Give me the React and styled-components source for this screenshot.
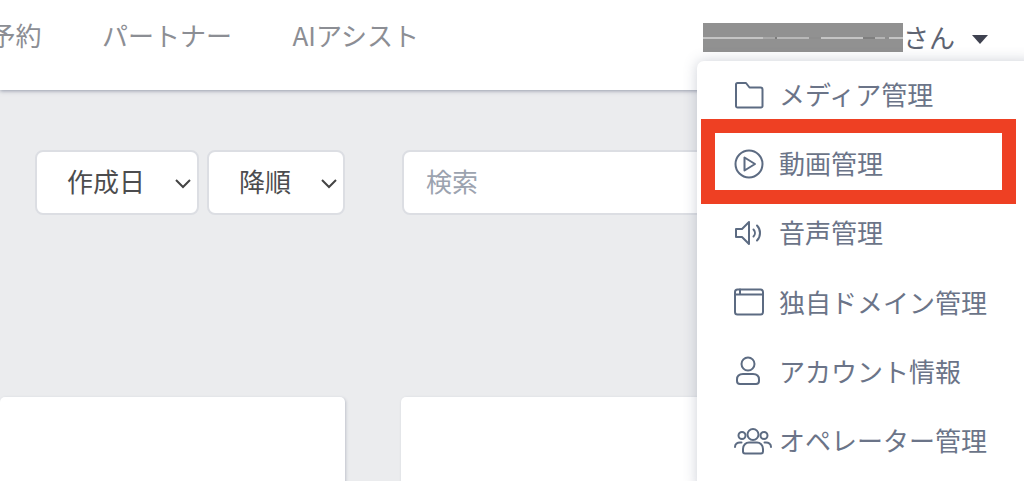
import React from 'react'
import styled, { createGlobalStyle } from 'styled-components'

const GlobalStyle = createGlobalStyle`
  html, body {
    margin: 0;
    padding: 0;
    height: 100%;
    overflow: hidden;
    background: #ebecee;
    font-family: "Noto Sans CJK JP", "Noto Sans", sans-serif;
  }
`

const navItems = ['予約', 'パートナー', 'AIアシスト']

const FolderIcon = () => (
  <Icon width="30" height="28" viewBox="0 0 30 28">
    <path d="M2 3.500a1.500 1.500 0 0 1 1.500-1.500h8.500l3.500 4.500h11a2 2 0 0 1 2 2V25a1.500 1.500 0 0 1-1.500 1.500H3.500A1.500 1.500 0 0 1 2 25z" />
  </Icon>
)

const PlayIcon = () => (
  <Icon width="30" height="30" viewBox="0 0 30 30">
    <circle cx="15" cy="15" r="13.500" />
    <path d="M10.500 8.500v13L21 15z" />
  </Icon>
)

const SpeakerIcon = () => (
  <Icon width="30" height="28" viewBox="0 0 30 28">
    <path d="M2 10h6l7-7v22l-7-7H2z" />
    <path d="M19.500 10.500a5 5 0 0 1 0 7" />
    <path d="M23 6.500a10.500 10.500 0 0 1 3 7.500 10.500 10.500 0 0 1-3 7.500" />
  </Icon>
)

const WindowIcon = () => (
  <Icon width="30" height="28" viewBox="0 0 30 28">
    <rect x="1" y="1.500" width="28" height="25" rx="2.500" />
    <path d="M1 6.500h28M6 1.500v5" />
  </Icon>
)

const UserIcon = () => (
  <Icon width="28" height="30" viewBox="0 0 28 30">
    <circle cx="14" cy="8" r="6.500" />
    <path d="M3 23.500c0-4 3-5.500 6-5.500h10c3 0 6 1.500 6 5.500v1.500a3 3 0 0 1-3 3H6a3 3 0 0 1-3-3z" />
  </Icon>
)

const UsersIcon = () => (
  <Icon width="38" height="28" viewBox="0 0 38 28">
    <circle cx="19" cy="7.500" r="5.500" />
    <circle cx="8" cy="8.500" r="3.500" />
    <circle cx="30" cy="8.500" r="3.500" />
    <path d="M9 22c0-4 3-6.500 6-6.500h8c3 0 6 2.500 6 6.500v2.500a2 2 0 0 1-2 2H11a2 2 0 0 1-2-2z" />
    <path d="M1 20c0-3 2.500-4.500 5-4.500h1.500M37 20c0-3-2.500-4.500-5-4.500h-1.500" />
  </Icon>
)

const menuItems = [
  { label: 'メディア管理', icon: <FolderIcon /> },
  { label: '動画管理', icon: <PlayIcon /> },
  { label: '音声管理', icon: <SpeakerIcon /> },
  { label: '独自ドメイン管理', icon: <WindowIcon /> },
  { label: 'アカウント情報', icon: <UserIcon /> },
  { label: 'オペレーター管理', icon: <UsersIcon /> },
]

const App = () => {
  return (
    <Page>
      <GlobalStyle />
      <Header>
        <Nav>
          {navItems.map((item) => (
            <NavItem key={item}>{item}</NavItem>
          ))}
        </Nav>
        <UserBox>
          <Redacted />
          <UserSuffix>さん</UserSuffix>
          <Caret />
        </UserBox>
      </Header>

      <Main>
        <Toolbar>
          <SelectBox $width={164}>
            作成日
            <Chevron />
          </SelectBox>
          <SelectBox $width={138}>
            降順
            <Chevron />
          </SelectBox>
          <SearchBox>検索</SearchBox>
        </Toolbar>
        <CardGrid>
          <Card />
          <Card />
        </CardGrid>
      </Main>

      <Menu>
        {menuItems.map((item) => (
          <MenuRow key={item.label}>
            <IconSlot>{item.icon}</IconSlot>
            <MenuLabel>{item.label}</MenuLabel>
          </MenuRow>
        ))}
      </Menu>
      <Highlight />
    </Page>
  )
}

const Chevron = () => (
  <ChevronSvg width="18" height="12" viewBox="0 0 18 12">
    <path d="M2 2l7 7 7-7" />
  </ChevronSvg>
)

const Page = styled.div`
  position: relative;
  width: 1024px;
  height: 481px;
  overflow: hidden;
  background: #ebecee;
`

const Header = styled.header`
  position: relative;
  z-index: 1;
  height: 90px;
  background: #fff;
  box-shadow: 0 1px 4px rgba(90, 100, 125, 0.6);
  display: flex;
  justify-content: space-between;
  padding: 0 36px 0 0;
  box-sizing: border-box;
`

const Nav = styled.nav`
  display: flex;
  gap: 60.5px;
  margin-left: -10.5px;
  height: 68px;
  align-items: center;
`

const NavItem = styled.span`
  font-size: 26px;
  color: #8c8e94;
  white-space: nowrap;
`

const UserBox = styled.div`
  display: flex;
  align-items: center;
  height: 75px;
`

const Redacted = styled.div`
  width: 200px;
  height: 29px;
  background:
    linear-gradient(
        90deg,
        #c4c4c4 0 60px,
        #a8a8a8 60px 72px,
        #7c7c7c 72px 74px,
        #b8b8b8 74px 106px,
        #8e8e8e 106px 118px,
        #c4c4c4 118px 160px,
        #7f7f7f 160px 172px,
        #b4b4b4 172px 182px,
        #8e8e8e 182px 186px,
        #c4c4c4 186px 200px
      )
      0 14px / 100% 2px no-repeat,
    #919191;
`

const UserSuffix = styled.span`
  font-size: 26px;
  color: #5e6472;
  padding-bottom: 3px;
`

const Caret = styled.span`
  width: 0;
  height: 0;
  margin-left: 17px;
  margin-top: 3px;
  border-left: 8px solid transparent;
  border-right: 8px solid transparent;
  border-top: 9px solid #3f4250;
`

const Main = styled.main`
  padding-top: 60px;
`

const Toolbar = styled.div`
  display: flex;
  gap: 8px;
  padding-left: 35px;
  height: 65px;
`

const SelectBox = styled.div`
  width: ${(props) => props.$width}px;
  box-sizing: border-box;
  display: flex;
  align-items: center;
  justify-content: space-between;
  padding: 0 5px 4px 30px;
  background: #fff;
  border: 2px solid #dcdee3;
  border-radius: 8px;
  font-size: 26px;
  color: #4c4c4e;
`

const ChevronSvg = styled.svg`
  fill: none;
  stroke: #444;
  stroke-width: 2;
  margin-top: 6px;
`

const SearchBox = styled.div`
  width: 340px;
  box-sizing: border-box;
  margin-left: 49px;
  display: flex;
  align-items: center;
  padding: 0 0 4px 22px;
  background: #fff;
  border: 2px solid #dcdee3;
  border-radius: 8px;
  font-size: 26px;
  color: #9ca3af;
`

const CardGrid = styled.div`
  display: grid;
  grid-template-columns: 345px 345px;
  gap: 56px;
  margin-top: 182px;
`

const Card = styled.div`
  height: 120px;
  background: #fff;
  border-radius: 5px;
  box-shadow: 1px 1px 3px rgba(90, 100, 125, 0.3);
`

const Menu = styled.div`
  position: absolute;
  z-index: 2;
  top: 61px;
  left: 697px;
  width: 340px;
  height: 430px;
  background: #fff;
  border-radius: 7px;
  box-shadow: 0 0 14px rgba(90, 100, 125, 0.3);
`

const MenuRow = styled.div`
  height: 69.2px;
  box-sizing: border-box;
  display: flex;
  align-items: center;
  padding: 0 0 2px 37px;
  font-size: 26px;
  color: #6b7488;
  white-space: nowrap;
`

const MenuLabel = styled.span`
  padding-bottom: 2px;
`

const IconSlot = styled.span`
  width: 46px;
  margin-right: -1px;
  display: flex;
  align-items: center;
`

const Icon = styled.svg`
  fill: none;
  stroke: #5c6b82;
  stroke-width: 2;
  stroke-linejoin: round;
  stroke-linecap: round;
`

const Highlight = styled.div`
  position: absolute;
  z-index: 3;
  top: 119px;
  left: 701px;
  width: 315px;
  height: 85px;
  box-sizing: border-box;
  border: 14px solid #ee4023;
`

export default App
